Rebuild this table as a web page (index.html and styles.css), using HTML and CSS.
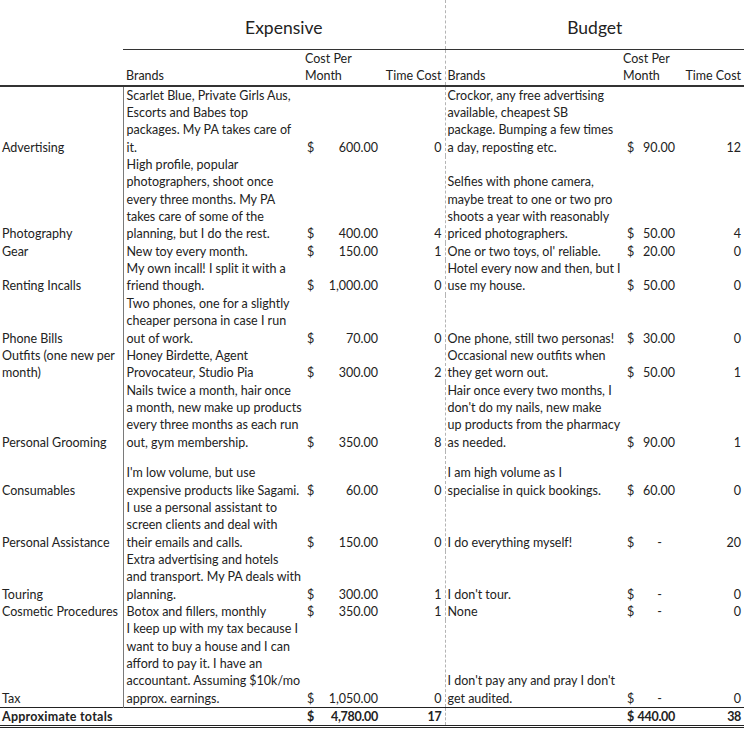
FILE: index.html
```html
<!DOCTYPE html>
<html>
<head>
<meta charset="utf-8">
<link rel="stylesheet" href="styles.css">
</head>
<body>
<table class="sheet">
  <colgroup>
    <col class="c-a"><col class="c-b"><col class="c-c"><col class="c-d"><col class="c-e"><col class="c-f"><col class="c-g">
  </colgroup>
  <tr class="title-row">
    <td></td>
    <td colspan="3" class="title">Expensive</td>
    <td colspan="3" class="title split">Budget</td>
  </tr>
  <tr class="head-row">
    <td></td>
    <td class="pl">Brands</td>
    <td>Cost Per<br>Month</td>
    <td class="num">Time Cost</td>
    <td class="split">Brands</td>
    <td class="pl">Cost Per<br>Month</td>
    <td class="num">Time Cost</td>
  </tr>
  <tr>
    <td>Advertising</td>
    <td class="desc">Scarlet Blue, Private Girls Aus,<br>Escorts and Babes top<br>packages. My PA takes care of<br>it.</td>
    <td><div class="money"><span>$</span><span>600.00</span></div></td>
    <td class="num">0</td>
    <td class="split">Crockor, any free advertising<br>available, cheapest SB<br>package. Bumping a few times<br>a day, reposting etc.</td>
    <td><div class="money b"><span>$</span><span>90.00</span></div></td>
    <td class="num">12</td>
  </tr>
  <tr>
    <td>Photography</td>
    <td class="desc">High profile, popular<br>photographers, shoot once<br>every three months. My PA<br>takes care of some of the<br>planning, but I do the rest.</td>
    <td><div class="money"><span>$</span><span>400.00</span></div></td>
    <td class="num">4</td>
    <td class="split">Selfies with phone camera,<br>maybe treat to one or two pro<br>shoots a year with reasonably<br>priced photographers.</td>
    <td><div class="money b"><span>$</span><span>50.00</span></div></td>
    <td class="num">4</td>
  </tr>
  <tr>
    <td>Gear</td>
    <td class="desc">New toy every month.</td>
    <td><div class="money"><span>$</span><span>150.00</span></div></td>
    <td class="num">1</td>
    <td class="split">One or two toys, ol' reliable.</td>
    <td><div class="money b"><span>$</span><span>20.00</span></div></td>
    <td class="num">0</td>
  </tr>
  <tr>
    <td>Renting Incalls</td>
    <td class="desc">My own incall! I split it with a<br>friend though.</td>
    <td><div class="money"><span>$</span><span>1,000.00</span></div></td>
    <td class="num">0</td>
    <td class="split">Hotel every now and then, but I<br>use my house.</td>
    <td><div class="money b"><span>$</span><span>50.00</span></div></td>
    <td class="num">0</td>
  </tr>
  <tr>
    <td>Phone Bills</td>
    <td class="desc">Two phones, one for a slightly<br>cheaper persona in case I run<br>out of work.</td>
    <td><div class="money"><span>$</span><span>70.00</span></div></td>
    <td class="num">0</td>
    <td class="split">One phone, still two personas!</td>
    <td><div class="money b"><span>$</span><span>30.00</span></div></td>
    <td class="num">0</td>
  </tr>
  <tr>
    <td>Outfits (one new per<br>month)</td>
    <td class="desc">Honey Birdette, Agent<br>Provocateur, Studio Pia</td>
    <td><div class="money"><span>$</span><span>300.00</span></div></td>
    <td class="num">2</td>
    <td class="split">Occasional new outfits when<br>they get worn out.</td>
    <td><div class="money b"><span>$</span><span>50.00</span></div></td>
    <td class="num">1</td>
  </tr>
  <tr>
    <td>Personal Grooming</td>
    <td class="desc">Nails twice a month, hair once<br>a month, new make up products<br>every three months as each run<br>out, gym membership.</td>
    <td><div class="money"><span>$</span><span>350.00</span></div></td>
    <td class="num">8</td>
    <td class="split">Hair once every two months, I<br>don't do my nails, new make<br>up products from the pharmacy<br>as needed.</td>
    <td><div class="money b"><span>$</span><span>90.00</span></div></td>
    <td class="num">1</td>
  </tr>
  <tr class="tall">
    <td>Consumables</td>
    <td class="desc">I'm low volume, but use<br>expensive products like Sagami.</td>
    <td><div class="money"><span>$</span><span>60.00</span></div></td>
    <td class="num">0</td>
    <td class="split">I am high volume as I<br>specialise in quick bookings.</td>
    <td><div class="money b"><span>$</span><span>60.00</span></div></td>
    <td class="num">0</td>
  </tr>
  <tr>
    <td>Personal Assistance</td>
    <td class="desc">I use a personal assistant to<br>screen clients and deal with<br>their emails and calls.</td>
    <td><div class="money"><span>$</span><span>150.00</span></div></td>
    <td class="num">0</td>
    <td class="split">I do everything myself!</td>
    <td><div class="money b"><span>$</span><span class="dash">-</span></div></td>
    <td class="num">20</td>
  </tr>
  <tr>
    <td>Touring</td>
    <td class="desc">Extra advertising and hotels<br>and transport. My PA deals with<br>planning.</td>
    <td><div class="money"><span>$</span><span>300.00</span></div></td>
    <td class="num">1</td>
    <td class="split">I don't tour.</td>
    <td><div class="money b"><span>$</span><span class="dash">-</span></div></td>
    <td class="num">0</td>
  </tr>
  <tr>
    <td>Cosmetic Procedures</td>
    <td class="desc">Botox and fillers, monthly</td>
    <td><div class="money"><span>$</span><span>350.00</span></div></td>
    <td class="num">1</td>
    <td class="split">None</td>
    <td><div class="money b"><span>$</span><span class="dash">-</span></div></td>
    <td class="num">0</td>
  </tr>
  <tr>
    <td>Tax</td>
    <td class="desc">I keep up with my tax because I<br>want to buy a house and I can<br>afford to pay it. I have an<br>accountant. Assuming $10k/mo<br>approx. earnings.</td>
    <td><div class="money"><span>$</span><span>1,050.00</span></div></td>
    <td class="num">0</td>
    <td class="split">I don't pay any and pray I don't<br>get audited.</td>
    <td><div class="money b"><span>$</span><span class="dash">-</span></div></td>
    <td class="num">0</td>
  </tr>
  <tr class="total-row">
    <td colspan="2" class="total-label">Approximate totals</td>
    <td><div class="money"><span>$</span><span>4,780.00</span></div></td>
    <td class="num">17</td>
    <td class="split"></td>
    <td><div class="money b"><span>$</span><span>440.00</span></div></td>
    <td class="num">38</td>
  </tr>
</table>
</body>
</html>
```

FILE: styles.css
```css
html, body {
  margin: 0;
  padding: 0;
  background: #ffffff;
}

body {
  font-family: Lato, "Liberation Sans", sans-serif;
  font-size: 12.5px;
  color: #222222;
}

.sheet {
  border-collapse: collapse;
  table-layout: fixed;
  width: 744px;
}

.c-a { width: 123px; }
.c-b { width: 180px; }
.c-c { width: 79px; }
.c-d { width: 63px; }
.c-e { width: 175px; }
.c-f { width: 61px; }
.c-g { width: 63px; }

.sheet td {
  padding: 0 2px;
  vertical-align: bottom;
  line-height: 17.35px;
  white-space: nowrap;
  overflow: visible;
}

.sheet td.pl {
  padding-left: 3px;
}

.sheet td.split {
  border-left: 1px dashed #b4b4b4;
  padding-left: 2px;
}

.sheet td.desc {
  border-left: 1px solid #7a7a7a;
  padding-left: 3px;
}

.sheet td.num {
  text-align: right;
  padding-right: 3px;
}

.title-row td {
  height: 43px;
  padding-top: 6px;
  vertical-align: middle;
}

.sheet td.title {
  text-align: center;
  font-size: 17.5px;
  border-bottom: 1px solid #333333;
  line-height: 20px;
}

.head-row td {
  height: 34px;
  border-bottom: 2px solid #333333;
}

.tall td {
  height: 48px;
}

.money {
  display: flex;
  justify-content: space-between;
  padding-left: 2px;
  padding-right: 2px;
}

.money.b {
  padding-left: 5px;
  padding-right: 4px;
}

.money .dash {
  padding-right: 13px;
}

.total-row td {
  font-weight: bold;
  border-top: 1px solid #222222;
  border-bottom: 3px double #222222;
  height: 16px;
  letter-spacing: -0.3px;
}

.sheet td.total-label {
  letter-spacing: 0.25px;
}
```
